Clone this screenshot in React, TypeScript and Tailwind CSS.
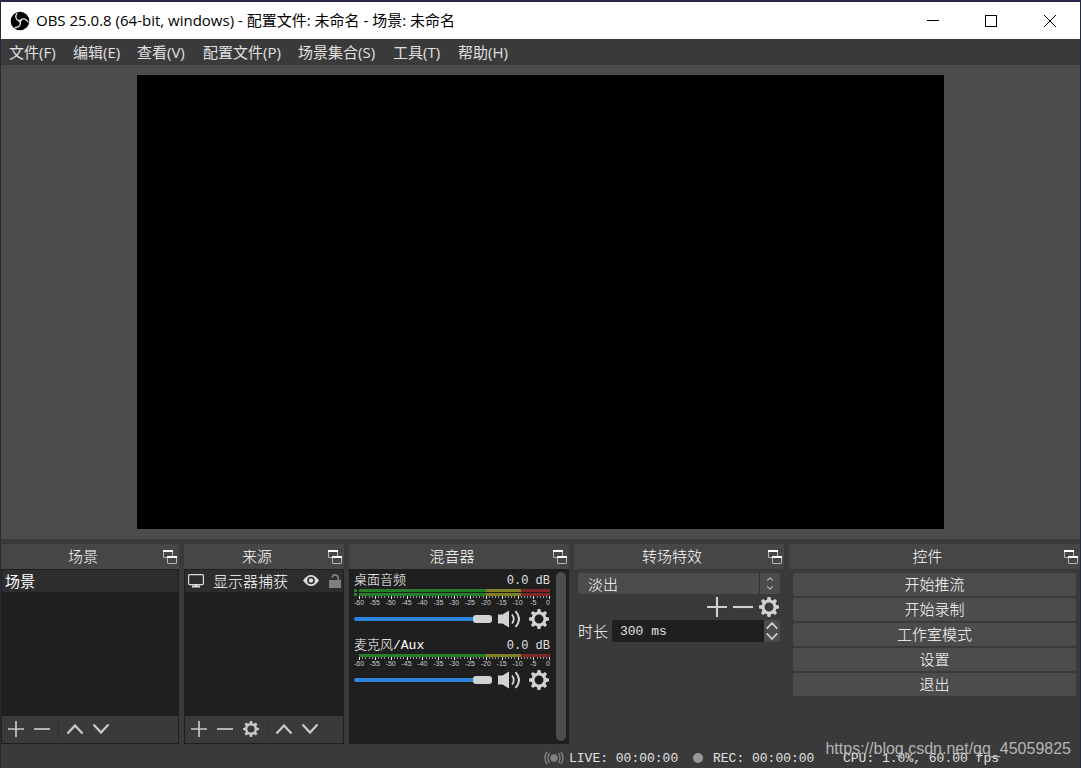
import type { ReactNode } from 'react';

const MENU_ITEMS = [
  { label: '文件(F)', width: 'w-16' },
  { label: '编辑(E)', width: 'w-16' },
  { label: '查看(V)', width: 'w-[66px]' },
  { label: '配置文件(P)', width: 'w-[95px]' },
  { label: '场景集合(S)', width: 'w-[95px]' },
  { label: '工具(T)', width: 'w-[65px]' },
  { label: '帮助(H)', width: 'w-16' },
];

const CONTROLS = ['开始推流', '开始录制', '工作室模式', '设置', '退出'];
const SCALE = [-60, -55, -50, -45, -40, -35, -30, -25, -20, -15, -10, -5, 0];

const GEAR_TEETH = [0, 45, 90, 135, 180, 225, 270, 315];

function ObsLogo() {
  return (
    <svg viewBox="0 0 20 20" className="size-5 shrink-0" fill="none" aria-hidden="true">
      <circle cx="10" cy="10" r="9.3" fill="#000" />
      {[0, 120, 240].map((angle) => (
        <path
          key={angle}
          d="M6.8 2.6C5 5.2 5.8 8.8 8.8 9.8C9.8 10.1 10.8 9.9 11.4 9.3"
          stroke="#e4e4e4"
          strokeWidth="1.3"
          strokeLinecap="round"
          transform={`rotate(${angle} 10 10)`}
        />
      ))}
    </svg>
  );
}

function GearIcon({ className }: { className: string }) {
  return (
    <svg viewBox="0 0 20 20" className={className} aria-hidden="true">
      <circle cx="10" cy="10" r="6" fill="none" stroke="currentColor" strokeWidth="3" />
      {GEAR_TEETH.map((angle) => (
        <path key={angle} d="M7.8 4L8.6 0H11.4L12.2 4Z" fill="currentColor" transform={`rotate(${angle} 10 10)`} />
      ))}
    </svg>
  );
}

function PlusIcon({ className }: { className: string }) {
  return (
    <svg viewBox="0 0 16 16" className={className} stroke="currentColor" strokeWidth="1.7" aria-hidden="true">
      <path d="M0 8H16M8 0V16" />
    </svg>
  );
}

function MinusIcon({ className }: { className: string }) {
  return (
    <svg viewBox="0 0 16 16" className={className} stroke="currentColor" strokeWidth="1.7" aria-hidden="true">
      <path d="M0 8H16" />
    </svg>
  );
}

function ChevronIcon({ className, down = false }: { className: string; down?: boolean }) {
  return (
    <svg viewBox="0 0 16 10" className={className} fill="none" stroke="currentColor" strokeWidth="2.3" strokeLinecap="round" aria-hidden="true">
      <path d={down ? 'M1.2 1.2L8 8.5L14.8 1.2' : 'M1.2 8.8L8 1.5L14.8 8.8'} />
    </svg>
  );
}

function PopoutIcon() {
  return (
    <svg viewBox="0 0 14 14" className="size-3.5" fill="none" aria-hidden="true">
      <path d="M5 7.5H.5V1H9.5V6" stroke="#b4b4b4" />
      <path d="M0 1H10" stroke="#fff" strokeWidth="2" />
      <rect x="4.5" y="6.5" width="9" height="7" rx=".5" fill="#464646" stroke="#b4b4b4" />
      <path d="M4 7H14" stroke="#fff" strokeWidth="2" />
    </svg>
  );
}

function SpeakerIcon() {
  return (
    <svg viewBox="0 0 22 18" className="h-[18px] w-[22px]" fill="none" stroke="currentColor" aria-hidden="true">
      <path d="M0 4.5H4.5L11 .5V17.5L4.5 13.5H0Z" fill="currentColor" stroke="none" />
      <path d="M14 4.5Q17.5 9 14 13.5" strokeWidth="1.8" />
      <path d="M17.5 1.2Q24.5 9 17.5 16.8" strokeWidth="2" />
    </svg>
  );
}

function MonitorIcon() {
  return (
    <svg viewBox="0 0 16 14" className="h-3.5 w-4 shrink-0" fill="none" stroke="#ddd" aria-hidden="true">
      <rect x=".6" y=".6" width="14.8" height="10" rx="1" strokeWidth="1.2" />
      <path d="M8 10.5V13M4 12.5H12" strokeWidth="2" />
    </svg>
  );
}

function EyeIcon() {
  return (
    <svg viewBox="0 0 16 11" className="h-[11px] w-4" aria-hidden="true">
      <path d="M0 5.5Q8-5.5 16 5.5Q8 16.5 0 5.5Z" fill="#ddd" />
      <circle cx="8" cy="5.5" r="3" fill="none" stroke="#2d2d2d" strokeWidth="1.6" />
    </svg>
  );
}

function UnlockIcon() {
  return (
    <svg viewBox="0 0 12 14" className="h-3.5 w-3" aria-hidden="true">
      <rect y="6" width="12" height="8" rx=".6" fill="#808080" />
      <path d="M9.2 7V4A3 3 0 0 0 3.2 3.8" fill="none" stroke="#808080" strokeWidth="1.8" />
    </svg>
  );
}

function Dock({ title, className, children }: { title: string; className: string; children: ReactNode }) {
  return (
    <section className={`flex min-w-0 flex-col ${className}`}>
      <header className="flex h-[25px] shrink-0 items-center bg-[#464646] pr-0.5">
        <h2 className="flex-1 pl-0.5 text-center font-['Noto_Sans_CJK_SC',sans-serif] text-[15px] font-light text-white">{title}</h2>
        <button aria-label={`${title} 浮动`} className="pt-0.5">
          <PopoutIcon />
        </button>
      </header>
      {children}
    </section>
  );
}

function ListToolbar({ settings = false }: { settings?: boolean }) {
  return (
    <div className="flex h-[27px] shrink-0 items-center bg-[#3a3a3a] pl-1.5 text-[#c8c8c8]">
      <button aria-label="添加" className="mr-2.5"><PlusIcon className="size-4" /></button>
      <button aria-label="移除" className="mr-2"><MinusIcon className="size-4" /></button>
      {settings && <button aria-label="属性" className="mr-2 ml-0.5"><GearIcon className="size-4" /></button>}
      <span className="mr-2 h-[18px] w-px bg-[#303030]" />
      <button aria-label="上移" className="mr-2.5"><ChevronIcon className="h-2.5 w-4" /></button>
      <button aria-label="下移"><ChevronIcon className="h-2.5 w-4" down /></button>
    </div>
  );
}

function VolumeMeter({ active }: { active: boolean }) {
  return (
    <svg viewBox="0 0 197 18" className="h-[18px] w-[197px]" aria-hidden="true">
      {(active ? [0, 4] : [0]).map((y) => (
        <g key={y}>
          {active && <rect x="0" y={y} width="3" height="3" fill="#267f26" />}
          <rect x="5" y={y} width="127" height="3" fill="#267f26" />
          <rect x="132" y={y} width="35" height="3" fill="#7f7f26" />
          <rect x="167" y={y} width="29" height="3" fill="#7f2626" />
        </g>
      ))}
      {Array.from({ length: 61 }, (_, i) => (
        <rect
          key={i}
          x={Math.round(5 + i * 3.17)}
          y={active ? 7 : 3}
          width="1"
          height={i % 5 === 0 ? 3 : 2}
          fill={i % 5 === 0 ? '#eee' : '#999'}
        />
      ))}
      {SCALE.map((value, i) => (
        <text
          key={value}
          x={value === 0 ? 194 : 5 + i * 15.85}
          y={active ? 16 : 12}
          textAnchor="middle"
          fill="#ccc"
          className="font-['Liberation_Sans',sans-serif] text-[7px]"
        >
          {value}
        </text>
      ))}
    </svg>
  );
}

function MixerChannel({ id, name, active = false }: { id: string; name: string; active?: boolean }) {
  return (
    <div className={active ? 'h-[65px]' : 'h-[61px]'}>
      <div className="flex h-[18px] items-center justify-between pr-px text-[12px]">
        <label htmlFor={id} className="pt-0.5 text-[13px] font-light text-white">{name}</label>
        <span className="pt-0.5">0.0 dB</span>
      </div>
      <div className={active ? 'h-[19px]' : 'h-[15px]'}>
        <VolumeMeter active={active} />
      </div>
      <div className="flex h-[22px] items-center text-[#d2d2d2]">
        <input
          id={id}
          type="range"
          min={0}
          max={100}
          defaultValue={100}
          className="h-2.5 w-[138px] appearance-none bg-transparent [&::-webkit-slider-runnable-track]:h-1 [&::-webkit-slider-runnable-track]:rounded-full [&::-webkit-slider-runnable-track]:bg-[#2a82da] [&::-webkit-slider-thumb]:-mt-0.5 [&::-webkit-slider-thumb]:h-2 [&::-webkit-slider-thumb]:w-[19px] [&::-webkit-slider-thumb]:appearance-none [&::-webkit-slider-thumb]:rounded-[3px] [&::-webkit-slider-thumb]:bg-[#d2d2d2]"
        />
        <button aria-label={`静音 ${name}`} className="ml-1.5"><SpeakerIcon /></button>
        <button aria-label={`设置 ${name}`} className="ml-[9px]"><GearIcon className="size-5" /></button>
      </div>
    </div>
  );
}

function TitleBar() {
  return (
    <header className="flex h-[39px] shrink-0 items-center border-t-2 border-[#25284a] bg-white pl-[9px] text-black">
      <ObsLogo />
      <h1 className="ml-1.5 flex-1 font-['Open_Sans','Noto_Sans_CJK_SC',sans-serif] text-[15px] whitespace-nowrap">
        OBS 25.0.8 (64-bit, windows) - 配置文件: 未命名 - 场景: 未命名
      </h1>
      <button aria-label="最小化" className="flex h-full w-[58px] items-center justify-center">
        <span className="h-px w-3 bg-black" />
      </button>
      <button aria-label="最大化" className="flex h-full w-[58px] items-center justify-center">
        <span className="size-3 border border-black" />
      </button>
      <button aria-label="关闭" className="flex h-full w-[60px] items-center justify-center">
        <svg viewBox="0 0 12 12" className="size-3" stroke="#000" aria-hidden="true">
          <path d="M0 0L12 12M12 0L0 12" />
        </svg>
      </button>
    </header>
  );
}

function StatusBar() {
  return (
    <footer className="relative flex h-[25px] shrink-0 items-center pt-1 pl-[543px] font-['Liberation_Mono','Noto_Sans_CJK_SC',monospace] text-[13px] whitespace-pre">
      <svg viewBox="0 0 20 14" className="mr-[5px] h-3.5 w-5" fill="none" stroke="#808080" strokeWidth="1.4" aria-hidden="true">
        <circle cx="10" cy="7" r="3.8" fill="#808080" stroke="none" />
        <path d="M5.5 2Q2.5 7 5.5 12M3 1Q-1 7 3 13M14.5 2Q17.5 7 14.5 12M17 1Q21 7 17 13" />
      </svg>
      <span className="w-[124px]">LIVE: 00:00:00</span>
      <span className="mr-2.5 size-2.5 rounded-full bg-[#999]" />
      <span className="w-[130px]">REC: 00:00:00</span>
      <span>CPU: 1.0%, 60.00 fps</span>
      <span className="absolute right-[9px] bottom-2 font-['Liberation_Sans',sans-serif] text-[16px] text-[#b5b5b5]">
        https://blog.csdn.net/qq_45059825
      </span>
    </footer>
  );
}

export default function App() {
  return (
    <div className="flex min-h-screen flex-col border-x border-[#252a40] bg-[#3a3a3a] font-['Liberation_Mono','Noto_Sans_CJK_SC',monospace] text-[#e1e1e1]">
      <TitleBar />
      <nav className="flex h-[26px] shrink-0 items-center pl-2 font-['Open_Sans','Noto_Sans_CJK_SC',sans-serif] text-[15px]">
        {MENU_ITEMS.map(({ label, width }) => (
          <button key={label} className={`text-left whitespace-nowrap ${width}`}>{label}</button>
        ))}
      </nav>

      {/* Preview */}
      <main className="flex-1 bg-[#4c4c4c] px-[136px] py-2.5">
        <div className="aspect-video w-full bg-black" />
      </main>

      {/* Docks */}
      <div className="mt-[5px] flex h-[200px] shrink-0 gap-[5px]">
        <Dock title="场景" className="w-[178px]">
          <div className="flex flex-1 flex-col border border-[#1f1f1f] bg-[#1f1f1f]">
            <ul className="flex-1 font-['Noto_Sans_CJK_SC',sans-serif] text-[15px]">
              <li className="h-[22px] bg-[#2d2d2d] pl-[3px] leading-[22px] text-white">场景</li>
            </ul>
            <ListToolbar />
          </div>
        </Dock>

        <Dock title="来源" className="w-40">
          <div className="flex flex-1 flex-col border border-[#1f1f1f] bg-[#1f1f1f]">
            <ul className="flex-1 font-['Noto_Sans_CJK_SC',sans-serif] text-[15px] font-light text-white">
              <li className="flex h-[22px] items-center bg-[#2d2d2d] pr-0.5 pl-[3px]">
                <MonitorIcon />
                <span className="ml-[9px] flex-1 whitespace-nowrap">显示器捕获</span>
                <button aria-label="可见" className="mr-2.5"><EyeIcon /></button>
                <button aria-label="锁定"><UnlockIcon /></button>
              </li>
            </ul>
            <ListToolbar settings />
          </div>
        </Dock>

        <Dock title="混音器" className="w-[220px]">
          <div className="flex flex-1 justify-between bg-[#1f1f1f] pr-[3px] pl-[5px]">
            <div className="w-[197px] pt-0.5">
              <MixerChannel id="desktop" name="桌面音频" active />
              <MixerChannel id="mic" name="麦克风/Aux" />
            </div>
            <div className="my-[3px] w-2.5 rounded-full bg-[#4c4c4c]" />
          </div>
        </Dock>

        <Dock title="转场特效" className="w-[210px]">
          <div className="px-1 pt-1 font-['Noto_Sans_CJK_SC',sans-serif] text-[15px] font-light text-white">
            <div className="relative flex">
              <select aria-label="转场特效" className="h-[21px] w-full appearance-none rounded-[3px] bg-[#4c4c4c] pl-2.5">
                <option>淡出</option>
              </select>
              <span className="pointer-events-none absolute inset-y-0 right-0 flex w-[21px] flex-col items-center justify-center gap-[5px] border-l border-[#303030]">
                <ChevronIcon className="h-1 w-1.5" />
                <ChevronIcon className="h-1 w-1.5" down />
              </span>
            </div>
            <div className="flex h-[26px] items-center justify-end gap-1.5 pr-px text-[#d2d2d2]">
              <button aria-label="添加转场"><PlusIcon className="size-5" /></button>
              <button aria-label="移除转场"><MinusIcon className="size-5" /></button>
              <button aria-label="转场属性"><GearIcon className="size-5" /></button>
            </div>
            <div className="flex h-[22px] items-center">
              <label htmlFor="duration" className="w-[34px] shrink-0">时长</label>
              <input
                id="duration"
                defaultValue="300 ms"
                className="h-[22px] min-w-0 flex-1 rounded-l-[3px] bg-[#1f1f1f] pt-px pl-2 font-['Liberation_Mono',monospace] text-[13px] text-[#e1e1e1]"
              />
              <div className="flex h-[22px] w-4 flex-col items-center justify-center gap-1 rounded-[3px] bg-[#4c4c4c] text-[#d2d2d2]">
                <button aria-label="增加"><ChevronIcon className="block h-[7px] w-3" /></button>
                <button aria-label="减少"><ChevronIcon className="block h-[7px] w-3" down /></button>
              </div>
            </div>
          </div>
        </Dock>

        <Dock title="控件" className="flex-1">
          <div className="flex flex-col gap-0.5 px-1 pt-1 font-['Noto_Sans_CJK_SC',sans-serif] text-[15px] font-light text-white">
            {CONTROLS.map((label) => (
              <button key={label} className="h-[23px] rounded-[3px] bg-[#4c4c4c] pb-0.5 leading-[21px]">{label}</button>
            ))}
          </div>
        </Dock>
      </div>
      <StatusBar />
    </div>
  );
}
